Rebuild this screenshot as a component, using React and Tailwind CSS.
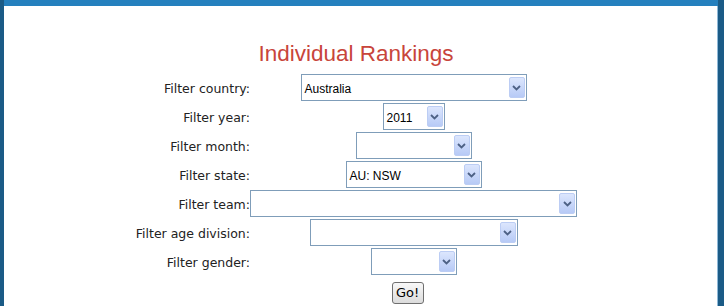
const rows = [
  { label: 'Filter country:', width: 'w-[226px]', value: 'Australia' },
  { label: 'Filter year:', width: 'w-[62px]', value: '2011' },
  { label: 'Filter month:', width: 'w-[116px]', value: '' },
  { label: 'Filter state:', width: 'w-[136px]', value: 'AU: NSW' },
  { label: 'Filter team:', width: 'w-[327px]', value: '' },
  { label: 'Filter age division:', width: 'w-[208px]', value: '' },
  { label: 'Filter gender:', width: 'w-[86px]', value: '' },
];

const Chevron = () => (
  <svg width="9" height="6" viewBox="0 0 9 6" fill="none">
    <path d="M1 1 L4.5 4.5 L8 1" stroke="#4d6185" strokeWidth="1.8" />
  </svg>
);

const FakeSelect = ({ width, value }) => (
  <div className={`flex h-[27px] ${width} items-stretch border border-[#7f9db9] bg-white p-[1px]`}>
    <span className="flex flex-1 items-center overflow-hidden pl-[2px] pt-[2px] text-[12px] text-black" style={{ fontFamily: '"Liberation Sans", Arial, sans-serif' }}>
      {value}
    </span>
    <span className="my-[1px] flex w-[16px] items-center justify-center rounded-[2px] border border-[#bccdf4] bg-gradient-to-b from-[#dce6fd] to-[#b7caf6]">
      <Chevron />
    </span>
  </div>
);

export default function App() {
  return (
    <div className="flex h-[306px] w-[724px] flex-col overflow-hidden border-l-[4px] border-r-[6px] border-[#1b5b86] bg-white">
      <div className="h-[6px] shrink-0 bg-[#2580be]" />
      <div className="flex flex-1 flex-col items-center border-r border-[#8fb9d8] pr-[9px]">
        <h1
          className="mt-[35px] text-[22.5px] leading-[26px] text-[#c8453b]"
          style={{ fontFamily: '"Liberation Sans", Arial, sans-serif' }}
        >
          Individual Rankings
        </h1>
        <div
          className="mt-[6px] grid grid-cols-[115px_327px] text-[12.5px] text-[#222]"
          style={{ fontFamily: '"DejaVu Sans", Verdana, sans-serif' }}
        >
          {rows.map((r) => (
            <div key={r.label} className="contents">
              <div className="flex h-[29px] items-center justify-end whitespace-nowrap pt-[3px]">{r.label}</div>
              <div className="flex h-[29px] items-center justify-center">
                <FakeSelect width={r.width} value={r.value} />
              </div>
            </div>
          ))}
          <div />
          <div className="flex justify-center pt-[6px] pr-[12px]">
            <button
              type="button"
              className="h-[22px] w-[32px] rounded-[3px] border border-[#6f6f6f] bg-gradient-to-b from-[#f8f8f8] to-[#dcdcdc] text-[13px] text-black"
              style={{ fontFamily: '"DejaVu Sans", Verdana, sans-serif' }}
            >
              Go!
            </button>
          </div>
        </div>
      </div>
    </div>
  );
}
